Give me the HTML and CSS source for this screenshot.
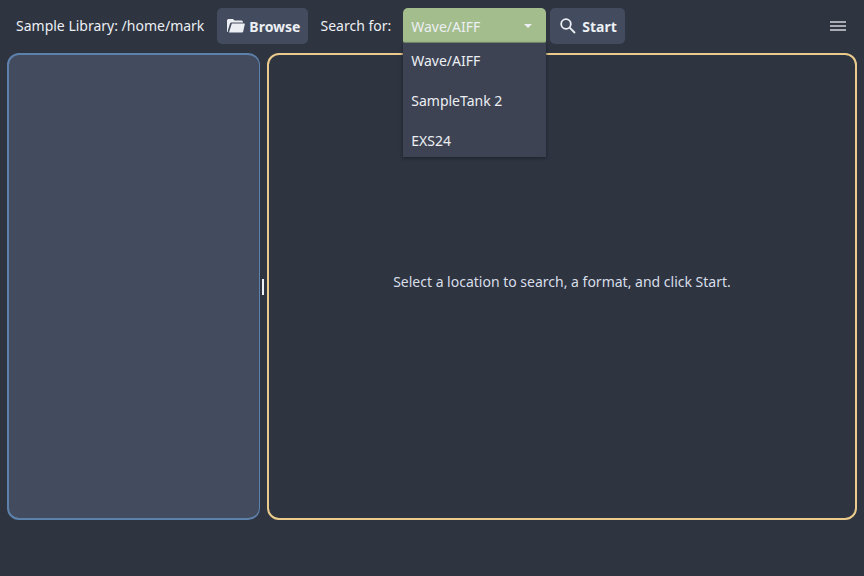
FILE: index.html
```html
<!DOCTYPE html>
<html lang="en">
<head>
    <meta charset="UTF-8">
    <title>Sample Library</title>
    <link rel="stylesheet" href="styles.css">
</head>

<body>
    <header class="toolbar">
        <span class="path">Sample Library: /home/mark</span>
        <button type="button" class="btn browse">
            <svg class="folder" viewBox="0 0 18 14" width="18" height="14" aria-hidden="true">
                <path d="M0 12V1.500Q0 0 1.500 0H6L7.500 1.500H14.500Q16 1.500 16 3V3.500H4.500Q3.500 3.500 3 4.500L1 11V13Q0 13 0 12Z"/>
                <path d="M4.800 4.500H17.200Q18 4.500 17.800 5.300L16.200 12.500Q15.900 13.500 15 13.500H2Z"/>
            </svg>
            Browse
        </button>
        <label class="search-label" for="format">Search for:</label>
        <div class="dropdown">
            <select id="format" class="format">
                <option selected>Wave/AIFF</option>
                <option>SampleTank 2</option>
                <option>EXS24</option>
            </select>
            <svg class="arrow" viewBox="0 0 8 4" width="8" height="4" aria-hidden="true">
                <path d="M0 0H8L4 4Z"/>
            </svg>
            <ul class="menu" role="listbox" aria-label="Format">
                <li role="option" aria-selected="true">Wave/AIFF</li>
                <li role="option" aria-selected="false">SampleTank 2</li>
                <li role="option" aria-selected="false">EXS24</li>
            </ul>
        </div>
        <button type="button" class="btn start">
            <svg class="glass" viewBox="0 0 16 16" width="16" height="16" aria-hidden="true">
                <circle cx="6" cy="6" r="4.800"/>
                <path d="M9.400 9.400L15 15"/>
            </svg>
            Start
        </button>
        <button type="button" class="hamburger" aria-label="Menu">
            <svg viewBox="0 0 16 10" width="16" height="10" aria-hidden="true">
                <path d="M0 0H16V2H0ZM0 4H16V6H0ZM0 8H16V10H0Z"/>
            </svg>
        </button>
    </header>

    <main class="panes">
        <section class="pane tree" aria-label="Folders"></section>
        <div class="splitter" role="separator" aria-orientation="vertical"></div>
        <section class="pane results">
            <p>Select a location to search, a format, and click Start.</p>
        </section>
    </main>
</body>
</html>
```
FILE: styles.css
```css
* {
    box-sizing: border-box;
}

body {
    display: flex;
    flex-direction: column;
    height: 100vh;
    margin: 0;
    background-color: #2e3440;
    color: #eceff4;
    font: 14px/20px "Noto Sans", sans-serif;
}

/* top bar */
.toolbar {
    display: flex;
    align-items: center;
    padding: 8px 18px 9px 16px;
}

.path,
.search-label {
    padding-bottom: 1px;
}

.btn {
    display: flex;
    align-items: center;
    height: 36px;
    padding: 2px 8px 0;
    border: 0;
    border-radius: 5px;
    background-color: #434c5e;
    color: #eceff4;
    font: bold 14px/20px "Noto Sans", sans-serif;
}

.btn svg {
    margin-bottom: 2px;
}

.browse {
    gap: 4px;
    margin: 0 12px 0 13px;
}

.folder {
    margin-left: 2px;
    fill: #eceff4;
}

.start {
    gap: 6px;
    margin-left: 4px;
}

.glass {
    margin-left: 2px;
    fill: none;
    stroke: #eceff4;
    stroke-width: 1.8;
}

/* format drop-down */
.dropdown {
    position: relative;
    width: 143px;
    height: 36px;
    margin-left: 12px;
}

.format {
    display: block;
    width: 100%;
    height: 35px;
    padding: 4px 8px 0;
    border: 0;
    border-bottom: 1px solid #829870;
    border-radius: 5px 5px 2px 2px;
    appearance: none;
    background-color: #a3be8c;
    color: #eceff4;
    font: 14px/20px "Noto Sans", sans-serif;
}

.arrow {
    position: absolute;
    top: 16px;
    right: 14px;
    fill: #eceff4;
    pointer-events: none;
}

.menu {
    position: absolute;
    top: 35px;
    left: 0;
    z-index: 1;
    display: grid;
    gap: 20px;
    width: 100%;
    margin: 0;
    padding: 8px 8px 6px;
    background-color: #3d4353;
    box-shadow: 0 1px 3px #1c2028;
    list-style: none;
}

.hamburger {
    display: flex;
    margin-left: auto;
    padding: 0;
    border: 0;
    background: none;
    fill: #a9acb2;
}

/* split view */
.panes {
    display: grid;
    grid-template-columns: 3fr 7px 7fr;
    flex: 1;
    padding: 0 7px 56px;
}

.pane {
    border: 2px solid #5e81ac;
    border-radius: 12px;
}

.tree {
    border-right-width: 1px;
    background-color: #434c5e;
}

.splitter {
    display: flex;
    align-items: center;
    justify-content: center;
}

.splitter::before {
    width: 2px;
    height: 16px;
    background-color: #eceff4;
    content: "";
}

.results {
    display: flex;
    align-items: center;
    justify-content: center;
    padding-bottom: 10px;
    border-color: #ebcb8b;
}

.results p {
    margin: 0;
    color: #d8dee9;
}
```
